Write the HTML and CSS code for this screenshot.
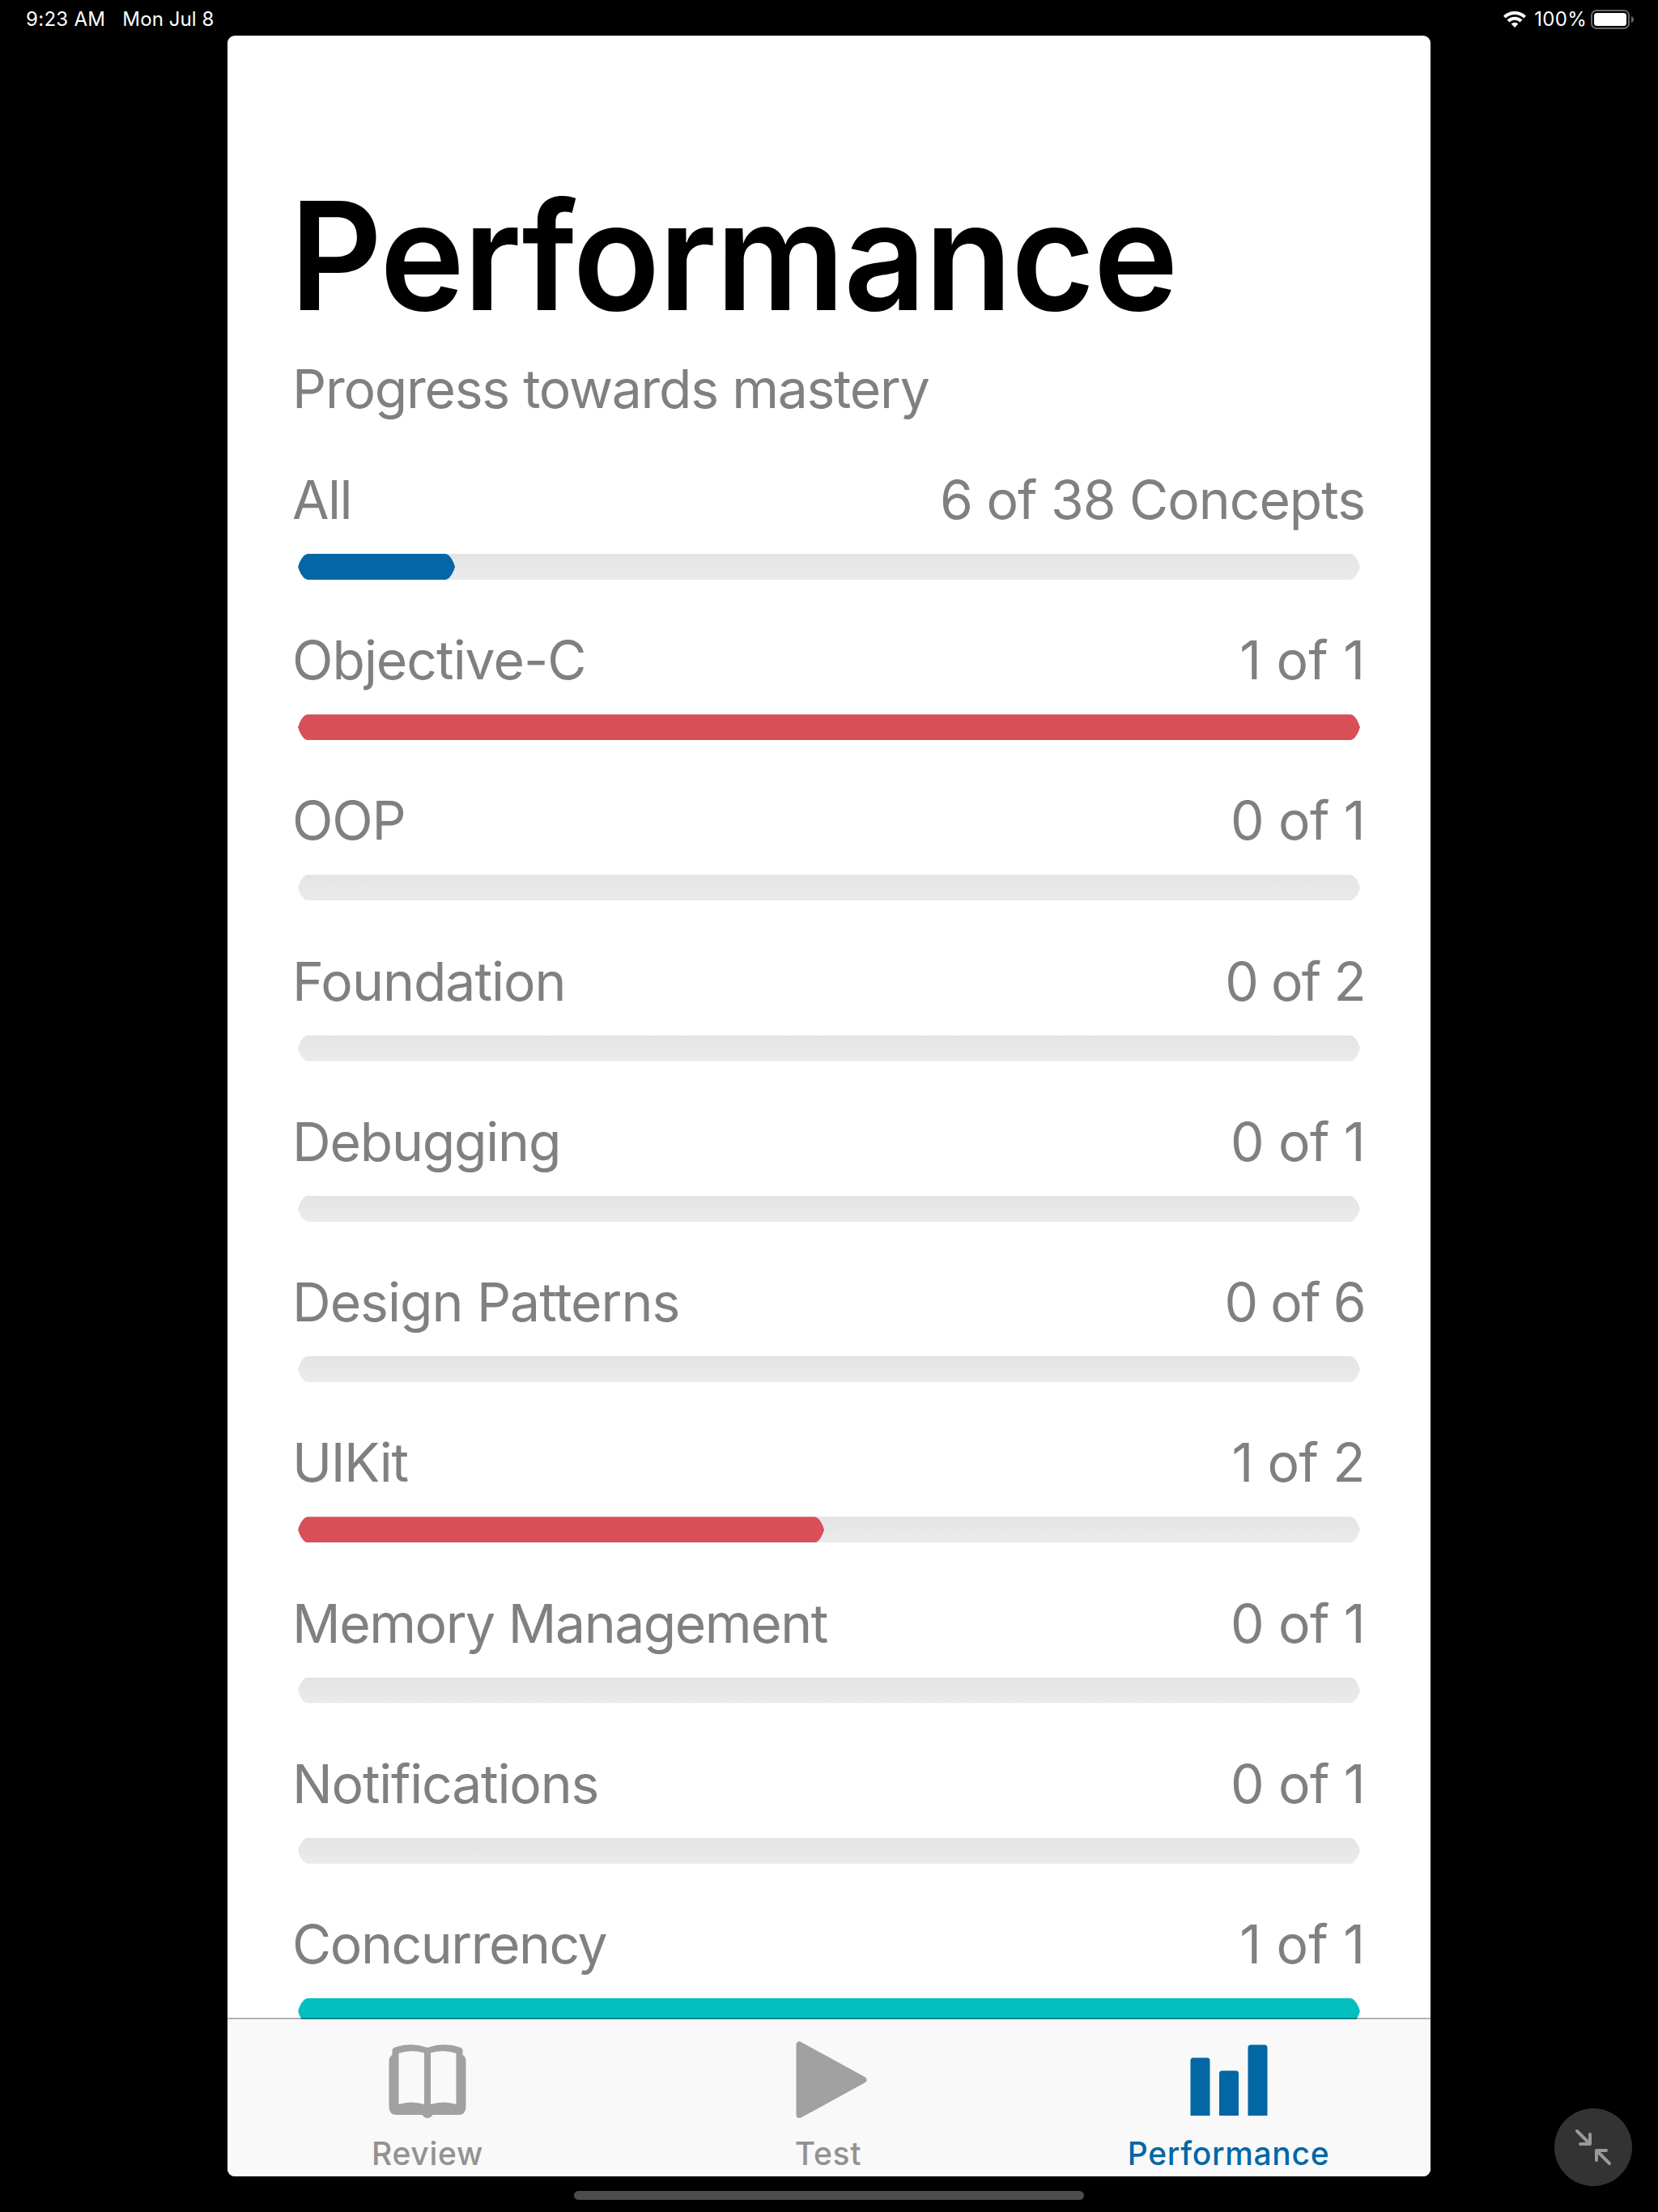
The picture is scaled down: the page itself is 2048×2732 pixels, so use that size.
FILE: index.html
```html
<!DOCTYPE html>
<html lang="en">
<head>
<meta charset="utf-8">
<title>Performance</title>
<link rel="stylesheet" href="styles.css">
</head>
<body>
<div class="screen">
  <header class="status">
    <span class="time">9:23 AM</span>
    <span class="date">Mon Jul 8</span>
    <svg class="wifi" width="28" height="20" viewBox="0 0 28 20">
      <g fill="none" stroke="#fff" stroke-width="4"><path d="M1.400 7.100A18 18 0 0 1 26.600 7.100"/><path d="M6 12A11.300 11.300 0 0 1 22 12"/></g>
      <path fill="#fff" d="M9.700 15.600A6.100 6.100 0 0 1 18.300 15.600L14 20Z"/>
    </svg>
    <span class="level">100%</span>
    <svg class="battery" width="54" height="24" viewBox="0 0 54 24">
      <rect x="1" y="1" width="46" height="22" rx="6" fill="none" stroke="#666" stroke-width="2"/>
      <rect x="4" y="4" width="40" height="16" rx="3.5" fill="#fff"/>
      <path d="M50 8Q53 9 53 12T50 16Z" fill="#666"/>
    </svg>
  </header>

  <main class="app">
    <section class="content">
      <h1 class="title">Performance</h1>
      <p class="subtitle">Progress towards mastery</p>
      <div class="rows">
        <div class="row"><div class="labels"><span class="name snug">All</span><span class="count long">6 of 38 Concepts</span></div><div class="track"><div class="fill blue" style="width:194px"></div></div></div>
        <div class="row"><div class="labels"><span class="name loose">Objective-C</span><span class="count ones">1 of 1</span></div><div class="track"><div class="fill red" style="width:100%"></div></div></div>
        <div class="row"><div class="labels"><span class="name">OOP</span><span class="count">0 of 1</span></div><div class="track"></div></div>
        <div class="row"><div class="labels"><span class="name loose">Foundation</span><span class="count tight">0 of 2</span></div><div class="track"></div></div>
        <div class="row"><div class="labels"><span class="name">Debugging</span><span class="count">0 of 1</span></div><div class="track"></div></div>
        <div class="row"><div class="labels"><span class="name loose">Design Patterns</span><span class="count tight">0 of 6</span></div><div class="track"></div></div>
        <div class="row"><div class="labels"><span class="name snug">UIKit</span><span class="count">1 of 2</span></div><div class="track"><div class="fill red" style="width:650px"></div></div></div>
        <div class="row"><div class="labels"><span class="name snug">Memory Management</span><span class="count">0 of 1</span></div><div class="track"></div></div>
        <div class="row"><div class="labels"><span class="name">Notifications</span><span class="count">0 of 1</span></div><div class="track"></div></div>
        <div class="row"><div class="labels"><span class="name snug">Concurrency</span><span class="count ones">1 of 1</span></div><div class="track"><div class="fill teal" style="width:100%"></div></div></div>
      </div>
    </section>
    <nav class="tabs">
      <a class="tab">
        <svg class="icon" width="96" height="96" viewBox="0 0 96 96">
          <path fill="#a1a1a1" fill-rule="evenodd" d="M4.500 12Q4.500 9 8 7.600Q28 .5 48 8Q68 .5 88 7.600Q91.500 9 91.500 12V17Q95.500 19 95.500 25V81Q95.500 91 86 91H54.500Q52 95 48 95T41.500 91H10Q.5 91 .5 81V25Q.5 19 4.500 17ZM12.500 15V78Q28 73 44 78V14.500Q28 10 12.500 15ZM52 14.500V78Q68 73 83.500 78V15Q68 10 52 14.500Z"/>
        </svg>
        <span>Review</span>
      </a>
      <a class="tab">
        <svg class="icon" width="96" height="96" viewBox="0 0 96 96">
          <path fill="#a1a1a1" stroke="#a1a1a1" stroke-width="8" stroke-linejoin="round" d="M12.500 4.500V91L91.500 47.800Z"/>
        </svg>
        <span>Test</span>
      </a>
      <a class="tab active">
        <svg class="icon" width="96" height="96" viewBox="0 0 96 96">
          <path fill="#0367a6" d="M.5 92V24Q.5 20.500 4 20.500H21Q24.500 20.500 24.500 24V92ZM36 92V40Q36 36.500 39.500 36.500H56.500Q60 36.500 60 40V92ZM71.500 92V8Q71.500 4.500 75 4.500H92Q95.500 4.500 95.500 8V92Z"/>
        </svg>
        <span>Performance</span>
      </a>
    </nav>
  </main>

  <div class="home"></div>
  <button class="shrink" aria-label="Shrink">
    <svg width="96" height="96" viewBox="0 0 96 96" fill="none" stroke="#999" stroke-width="4" stroke-linecap="round" stroke-linejoin="round">
      <path d="M28 28L43.500 43.500M32 44H44V32M68 68L52.500 52.500M64 52H52V64"/>
    </svg>
  </button>
</div>
</body>
</html>
```
FILE: styles.css
```css
* { box-sizing: border-box; }
body { margin: 0; background: #000; font-family: Inter, "Liberation Sans", sans-serif; }
.screen { position: relative; width: 2048px; height: 2732px; background: #000; overflow: hidden; display: flex; flex-direction: column; align-items: center; }

.status { width: 100%; height: 44px; flex: none; display: flex; align-items: flex-start; padding: 9px 29px 0 32px; color: #fff; font-size: 24px; line-height: 29px; letter-spacing: .3px; white-space: nowrap; }
.date { margin-left: 21px; letter-spacing: .1px; }
.wifi { margin: 5px 10px 0 auto; }
.battery { margin: 3px 0 0 5px; }

.app { width: 1486px; height: 2644px; flex: none; border-radius: 9px; overflow: hidden; background: #fff; display: flex; flex-direction: column; }
.content { height: 2450px; flex: none; overflow: hidden; padding: 162px 81px 0 80px; }
.title { margin: 0 0 0 -3px; height: 220px; line-height: 220px; font-size: 185px; font-weight: 600; letter-spacing: -1.600px; white-space: nowrap; transform: scaleX(.957); transform-origin: 0 50%; }
.subtitle { margin: 14px 0 0; height: 80px; font-size: 66px; line-height: 80px; color: #808080; letter-spacing: -1.250px; white-space: nowrap; }
.rows { margin-top: 57px; display: grid; grid-auto-rows: 198.22px; color: #808080; }
.row { display: flex; flex-direction: column; }
.labels { display: flex; justify-content: space-between; font-size: 66px; line-height: 80px; height: 107px; white-space: nowrap; }
.name { letter-spacing: -1.200px; }
.name.loose { letter-spacing: -1px; }
.name.snug { letter-spacing: -1.450px; }
.count { letter-spacing: -.6px; }
.count.long { letter-spacing: -1.020px; }
.count.tight { letter-spacing: -1.700px; }
.count.ones { letter-spacing: 0; }

/* Bars taper to a soft point at both ends */
.track, .fill {
  height: 32px;
  clip-path: polygon(0 50%, 1.500px 36%, 4px 20%, 7px 8%, 9.500px 2%, 12px 0, calc(100% - 12px) 0, calc(100% - 9.500px) 2%, calc(100% - 7px) 8%, calc(100% - 4px) 20%, calc(100% - 1.500px) 36%, 100% 50%, calc(100% - 1.500px) 64%, calc(100% - 4px) 80%, calc(100% - 7px) 92%, calc(100% - 9.500px) 98%, calc(100% - 12px) 100%, 12px 100%, 9.500px 98%, 7px 92%, 4px 80%, 1.500px 64%);
}
.track { margin: 0 6px 0 7px; background: linear-gradient(#e4e4e4, #ebebeb); }
.blue { background: #0367a6; }
.red { background: #d84f57; }
.teal { background: #04bfbf; }

.tabs { position: relative; margin-top: -2px; height: 196px; flex: none; border-top: 2px solid rgba(0, 0, 0, .3); background: #f9f9f9; background-clip: padding-box; display: grid; grid-template-columns: 494px 496px 493px; color: #929292; font-size: 39px; line-height: 48px; font-weight: 500; letter-spacing: .7px; }
.tab { display: flex; flex-direction: column; align-items: center; padding-top: 27px; }
.tab span { margin-top: 19px; }
.tab.active { color: #0367a6; }
.icon { display: block; }

.home { width: 630px; height: 11px; flex: none; margin-top: 18px; border-radius: 5.500px; background: #4c4c4c; }
.shrink { position: absolute; left: 1920px; top: 2604px; width: 96px; height: 96px; padding: 0; border: 0; border-radius: 50%; background: #333; }
.shrink svg { display: block; }
```
